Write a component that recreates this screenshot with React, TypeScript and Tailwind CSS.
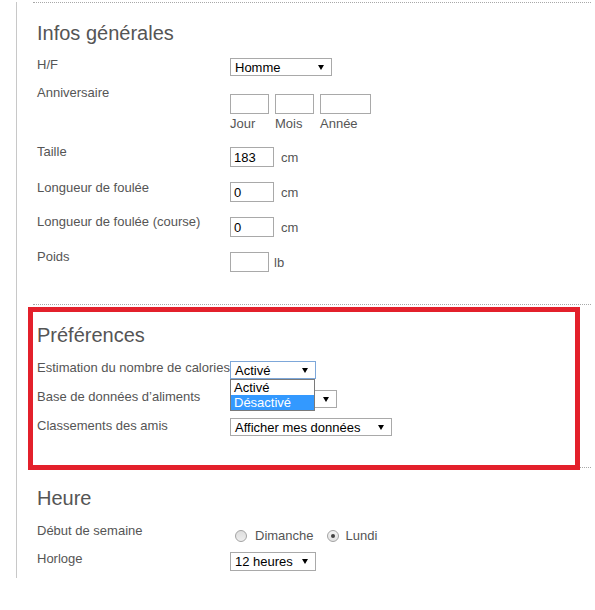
import React from 'react';

const Arrow = () => (
  <svg width="6" height="5" viewBox="0 0 6 5" className="shrink-0 mr-[7px]">
    <polygon points="0,0 6,0 3,5" fill="#000" />
  </svg>
);

const Select = ({
  text,
  className,
  focused = false,
  children
}: {
  text: string;
  className: string;
  focused?: boolean;
  children?: React.ReactNode;
}) => {
  return <div className={`relative flex items-center bg-white border ${focused ? 'border-[#7da7d9]' : 'border-[#a9a9a9]'} ${className}`}>
      <span className="flex-1 pl-[4px] text-[13px] leading-[15px] text-black whitespace-nowrap overflow-hidden">{text}</span>
      <Arrow />
      {children}
    </div>;
};

const Field = ({ value = '', className }: { value?: string; className: string }) => {
  return <div className={`flex items-center h-[20px] border border-[#a9a9a9] bg-white pl-[3px] text-[13px] leading-[15px] text-black ${className}`}>
      {value}
    </div>;
};

const Label = ({ children, className = '' }: { children: React.ReactNode; className?: string }) => {
  return <div className={`w-[193px] shrink-0 text-[13px] leading-[15px] text-[#555] whitespace-nowrap ${className}`}>{children}</div>;
};

const Heading = ({ children }: { children: React.ReactNode }) => {
  return <h2 className="text-[20px] leading-[23px] text-[#555] font-normal">{children}</h2>;
};

const Radio = ({ checked = false, className }: { checked?: boolean; className: string }) => {
  return <span className={`flex items-center justify-center w-[12px] h-[12px] rounded-full border border-[#a3a3a3] shrink-0 ${checked ? 'bg-linear-to-b from-[#f4f4f4] to-[#e2e2e2]' : 'bg-linear-to-b from-[#dedede] to-[#eeeeee]'} ${className}`}>
      {checked && <span className="w-[4px] h-[4px] rounded-full bg-[#444]" />}
    </span>;
};

const Unit = ({ children, className }: { children: React.ReactNode; className: string }) => {
  return <span className={`text-[13px] leading-[15px] text-[#555] ${className}`}>{children}</span>;
};

export default function App() {
  return <div className="relative w-[595px] h-[610px] bg-white overflow-hidden font-['Liberation_Sans',Arial,sans-serif]">
      <div className="ml-[16px] w-[575px] border-l border-[#c8c8c8] pb-[7px]">
        {/* Infos générales */}
        <section className="mt-[2px] ml-[16px] w-[558px] border-t border-dotted border-[#a8a8a8] pl-[4px] pt-[19px]">
          <Heading>Infos générales</Heading>
          <div className="flex items-start mt-[12px]">
            <Label>H/F</Label>
            <Select text="Homme" className="mt-[1px] w-[102px] h-[18px]" />
          </div>
          <div className="flex items-start mt-[9px]">
            <Label>Anniversaire</Label>
            <div className="mt-[9px] flex gap-[6px]">
              <div>
                <Field className="w-[39px]" />
                <div className="mt-[2px] text-[13px] leading-[15px] text-[#555]">Jour</div>
              </div>
              <div>
                <Field className="w-[39px]" />
                <div className="mt-[2px] text-[13px] leading-[15px] text-[#555]">Mois</div>
              </div>
              <div>
                <Field className="w-[51px]" />
                <div className="mt-[2px] text-[13px] leading-[15px] text-[#555]">Année</div>
              </div>
            </div>
          </div>
          <div className="flex items-start mt-[13px]">
            <Label>Taille</Label>
            <div className="mt-[3px] flex items-center">
              <Field value="183" className="w-[44px]" />
              <Unit className="ml-[7px]">cm</Unit>
            </div>
          </div>
          <div className="flex items-start mt-[13px]">
            <Label>Longueur de foulée</Label>
            <div className="mt-[2px] flex items-center">
              <Field value="0" className="w-[44px]" />
              <Unit className="ml-[7px]">cm</Unit>
            </div>
          </div>
          <div className="flex items-start mt-[12px]">
            <Label>Longueur de foulée (course)</Label>
            <div className="mt-[3px] flex items-center">
              <Field value="0" className="w-[44px]" />
              <Unit className="ml-[7px]">cm</Unit>
            </div>
          </div>
          <div className="flex items-start mt-[12px]">
            <Label>Poids</Label>
            <div className="mt-[3px] flex items-center">
              <Field className="w-[39px]" />
              <Unit className="ml-[5px]">lb</Unit>
            </div>
          </div>
        </section>

        {/* Préférences */}
        <section className="mt-[32px] ml-[16px] w-[558px] border-t border-dotted border-[#a8a8a8] pl-[4px] pt-[19px]">
          <Heading>Préférences</Heading>
          <div className="relative z-10 flex items-start mt-[12px]">
            <Label className="pt-[1px]">Estimation du nombre de calories</Label>
            <Select text="Activé" focused className="mt-[2px] w-[86px] h-[18px]">
              <div className="absolute left-[-1px] top-[17px] w-[85px] border border-[#7a7a7a] bg-white text-[13px] leading-[15px]">
                <div className="h-[15px] pl-[3px] text-black">Activé</div>
                <div className="h-[15px] pl-[3px] bg-[#3399ff] text-white">Désactivé</div>
              </div>
            </Select>
          </div>
          <div className="flex items-start mt-[9px]">
            <Label className="pt-[1px]">Base de données d’aliments</Label>
            <Select text="" className="mt-[2px] w-[107px] h-[18px]" />
          </div>
          <div className="flex items-start mt-[9px]">
            <Label className="pt-[1px]">Classements des amis</Label>
            <Select text="Afficher mes données" className="mt-[1px] w-[162px] h-[18px]" />
          </div>
        </section>

        {/* Heure */}
        <section className="mt-[31px] ml-[16px] w-[558px] border-t border-dotted border-[#a8a8a8] pl-[4px] pt-[19px]">
          <Heading>Heure</Heading>
          <div className="flex items-start mt-[13px]">
            <Label>Début de semaine</Label>
            <div className="mt-[5px] flex items-center h-[15px]">
              <Radio className="ml-[5px]" />
              <Unit className="ml-[8px]">Dimanche</Unit>
              <Radio checked className="ml-[13px]" />
              <Unit className="ml-[7px]">Lundi</Unit>
            </div>
          </div>
          <div className="flex items-start mt-[8px]">
            <Label>Horloge</Label>
            <Select text="12 heures" className="mt-[1px] w-[86px] h-[19px]" />
          </div>
        </section>
      </div>

      {/* annotation box */}
      <div className="pointer-events-none absolute left-[28px] top-[307px] w-[552px] h-[163px] border-[5px] border-[#e3202b]" />
    </div>;
}
